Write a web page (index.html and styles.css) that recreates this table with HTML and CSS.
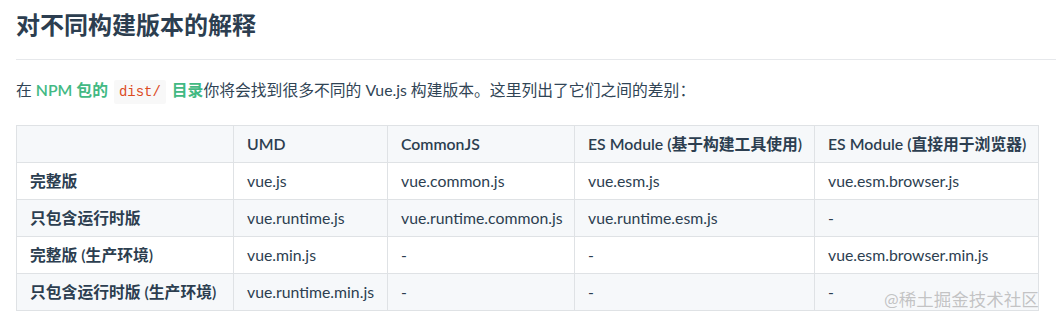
FILE: index.html
```html
<!DOCTYPE html>
<html lang="zh-CN">
<head>
<meta charset="utf-8">
<title>对不同构建版本的解释</title>
<link rel="stylesheet" href="styles.css">
</head>
<body>
<main class="content">
  <h2 class="title">对不同构建版本的解释</h2>
  <p class="intro">在 <a class="link" href="#">NPM 包的 <code class="code">dist/</code> 目录</a>你将会找到很多不同的 Vue.js 构建版本。这里列出了它们之间的差别：</p>
  <table class="builds">
    <colgroup>
      <col class="c1"><col class="c2"><col class="c3"><col class="c4"><col class="c5">
    </colgroup>
    <thead>
      <tr><th></th><th>UMD</th><th>CommonJS</th><th>ES Module (基于构建工具使用)</th><th>ES Module (直接用于浏览器)</th></tr>
    </thead>
    <tbody>
      <tr><td class="name">完整版</td><td>vue.js</td><td>vue.common.js</td><td>vue.esm.js</td><td>vue.esm.browser.js</td></tr>
      <tr><td class="name">只包含运行时版</td><td>vue.runtime.js</td><td>vue.runtime.common.js</td><td>vue.runtime.esm.js</td><td>-</td></tr>
      <tr><td class="name">完整版 (生产环境)</td><td>vue.min.js</td><td>-</td><td>-</td><td>vue.esm.browser.min.js</td></tr>
      <tr><td class="name">只包含运行时版 (生产环境)</td><td>vue.runtime.min.js</td><td>-</td><td>-</td><td>-</td></tr>
    </tbody>
  </table>
  <div class="watermark">@稀土掘金技术社区</div>
</main>
</body>
</html>
```

FILE: styles.css
```css
html, body {
  margin: 0;
  padding: 0;
  background: #fff;
}
body {
  font-family: Lato, "Noto Sans CJK SC", sans-serif;
  color: #304455;
  font-size: 15.8px;
}
.content {
  position: relative;
  padding: 0 0 0 16px;
  height: 325px;
  box-sizing: border-box;
  overflow: hidden;
}
.title {
  margin: 0;
  padding: 7px 0 16px;
  font-size: 24px;
  line-height: 36px;
  font-weight: 600;
  color: #2c3e50;
  border-bottom: 1px solid #e6e8eb;
}
.intro {
  margin: 18px 0 0;
  line-height: 24px;
}
.link {
  color: #42b983;
  font-weight: 600;
  text-decoration: none;
}
.code {
  font-family: "Liberation Mono", "DejaVu Sans Mono", monospace;
  font-size: 14px;
  font-weight: 400;
  color: #dc4a1e;
  background: #f8f8f8;
  padding: 4px 5px;
  margin: 0 2px;
  border-radius: 2px;
}
.builds {
  margin-top: 21px;
  border-collapse: collapse;
  table-layout: fixed;
  width: 1022px;
  color: #2c3e50;
}
.c1 { width: 217px; }
.c2 { width: 154px; }
.c3 { width: 187px; }
.c4 { width: 240px; }
.c5 { width: 224px; }
.builds th,
.builds td {
  border: 1px solid #dfe2e5;
  padding: 6px 13px;
  line-height: 24px;
  text-align: left;
  white-space: nowrap;
}
.builds th {
  font-weight: 600;
  background: #f6f8fa;
}
.builds td.name {
  font-weight: 600;
}
.builds tbody tr:nth-child(even) td {
  background: #f6f8fa;
}
.watermark {
  position: absolute;
  left: 884px;
  top: 288px;
  font-size: 17.5px;
  line-height: 24px;
  color: rgba(150, 150, 150, 0.55);
}
```
